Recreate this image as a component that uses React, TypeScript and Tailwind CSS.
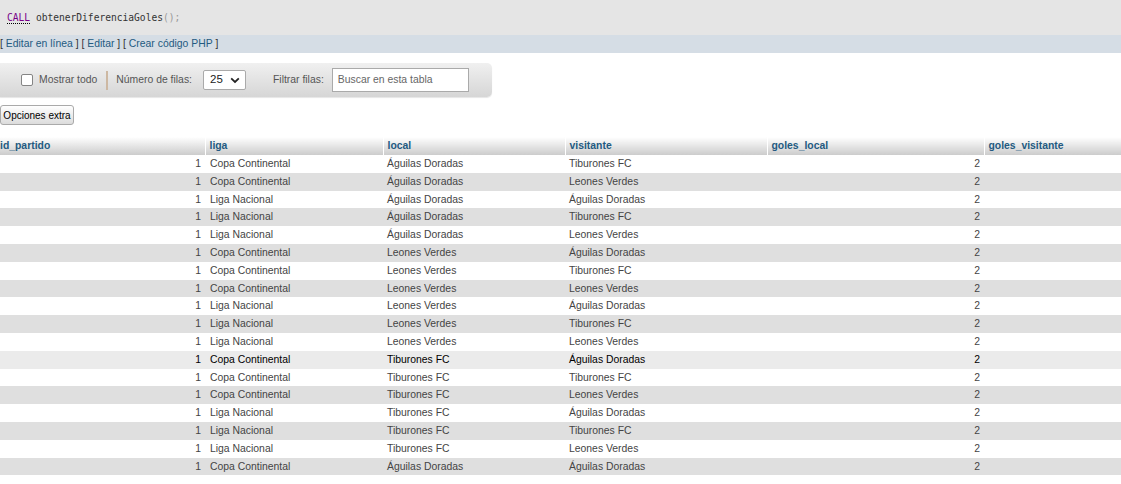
import React from 'react'

type Row = { liga: string, local: string, visitante: string }

const rows: Row[] = [
  { liga: 'Copa Continental', local: 'Águilas Doradas', visitante: 'Tiburones FC' },
  { liga: 'Copa Continental', local: 'Águilas Doradas', visitante: 'Leones Verdes' },
  { liga: 'Liga Nacional', local: 'Águilas Doradas', visitante: 'Águilas Doradas' },
  { liga: 'Liga Nacional', local: 'Águilas Doradas', visitante: 'Tiburones FC' },
  { liga: 'Liga Nacional', local: 'Águilas Doradas', visitante: 'Leones Verdes' },
  { liga: 'Copa Continental', local: 'Leones Verdes', visitante: 'Águilas Doradas' },
  { liga: 'Copa Continental', local: 'Leones Verdes', visitante: 'Tiburones FC' },
  { liga: 'Copa Continental', local: 'Leones Verdes', visitante: 'Leones Verdes' },
  { liga: 'Liga Nacional', local: 'Leones Verdes', visitante: 'Águilas Doradas' },
  { liga: 'Liga Nacional', local: 'Leones Verdes', visitante: 'Tiburones FC' },
  { liga: 'Liga Nacional', local: 'Leones Verdes', visitante: 'Leones Verdes' },
  { liga: 'Copa Continental', local: 'Tiburones FC', visitante: 'Águilas Doradas' },
  { liga: 'Copa Continental', local: 'Tiburones FC', visitante: 'Tiburones FC' },
  { liga: 'Copa Continental', local: 'Tiburones FC', visitante: 'Leones Verdes' },
  { liga: 'Liga Nacional', local: 'Tiburones FC', visitante: 'Águilas Doradas' },
  { liga: 'Liga Nacional', local: 'Tiburones FC', visitante: 'Tiburones FC' },
  { liga: 'Liga Nacional', local: 'Tiburones FC', visitante: 'Leones Verdes' },
  { liga: 'Copa Continental', local: 'Águilas Doradas', visitante: 'Águilas Doradas' },
]

const headers = ['id_partido', 'liga', 'local', 'visitante', 'goles_local', 'goles_visitante']
const widths = ['w-[205px]', 'w-[178px]', 'w-[182px]', 'w-[202px]', 'w-[217px]', '']

function Link({ children }: { children: React.ReactNode }) {
  return <a className="text-[#235a81] cursor-pointer">{children}</a>
}

export default function App() {
  const hovered = 11
  return (
    <div className="w-[1121px] h-[484px] overflow-hidden bg-white text-[10.4px] text-[#444]" style={{ fontFamily: '"Liberation Sans", Arial, sans-serif' }}>
      <div className="h-[35px] bg-[#e5e5e5] flex items-center pl-[7px] pt-[1px]">
        <code className="text-[9.6px] text-[#333]" style={{ fontFamily: '"DejaVu Sans Mono", monospace' }}>
          <span className="text-[#770088] border-b border-dotted border-black">CALL</span> obtenerDiferenciaGoles<span className="text-[#999]">();</span>
        </code>
      </div>
      <div className="h-[18px] bg-[#d5dde5] flex items-center text-[#333]">
        [&nbsp;<Link>Editar en línea</Link>&nbsp;] [&nbsp;<Link>Editar</Link>&nbsp;] [&nbsp;<Link>Crear código PHP</Link>&nbsp;]
      </div>

      <div className="mt-[10px] w-[492px] h-[34px] rounded-r-[5px] bg-gradient-to-b from-[#f0f0f0] to-[#d6d6d6] flex items-center text-[#555] shadow-[0_1px_1px_rgba(0,0,0,0.1)]">
        <span className="ml-[21px] w-[12px] h-[12px] border border-[#858585] rounded-[2px] bg-white"></span>
        <span className="ml-[6px]">Mostrar todo</span>
        <span className="ml-[9px] w-[2px] h-[19px] bg-[#cdb8a2]"></span>
        <span className="ml-[8px]">Número de filas:</span>
        <span className="ml-[11px] w-[43px] h-[20px] bg-white border border-[#aaa] rounded-[2px] flex items-center justify-between pl-[6px] pr-[5px] text-[#222] text-[11.5px]">
          25
          <svg width="10" height="7" viewBox="0 0 10 7"><path d="M1.2 1.4 L5 5 L8.8 1.4" fill="none" stroke="#222" strokeWidth="1.8" /></svg>
        </span>
        <span className="ml-[27px]">Filtrar filas:</span>
        <span className="ml-[8px] w-[137px] h-[24px] bg-white border border-[#aaa] flex items-center pl-[5px] text-[#666]">Buscar en esta tabla</span>
      </div>

      <div className="mt-[8px] w-[74px] h-[20px] border border-[#aaa] rounded-[3px] bg-gradient-to-b from-[#ffffff] to-[#dcdcdc] flex items-center justify-center text-black text-[10px]">
        Opciones extra
      </div>

      <table className="mt-[12px] w-[1121px] border-collapse table-fixed">
        <thead>
          <tr className="h-[18px]">
            {headers.map((h, i) => (
              <th key={h} className={`${widths[i]} bg-gradient-to-b from-[#ffffff] to-[#cccccc] text-left font-bold text-[#235a81] p-0 ${i === 0 ? 'pl-0' : 'pl-[4px]'} ${i < 5 ? 'border-r border-white' : ''}`}>
                {h}
              </th>
            ))}
          </tr>
        </thead>
        <tbody>
          {rows.map((r, i) => {
            const bg = i === hovered ? 'bg-[#ebebeb] text-black' : i % 2 === 1 ? 'bg-[#dfdfdf]' : 'bg-white'
            return (
              <tr key={i} className={`h-[17.8px] ${bg}`}>
                <td className="p-0 pr-[4px] text-right leading-[17.8px]">1</td>
                <td className="p-0 pl-[5px] leading-[17.8px]">{r.liga}</td>
                <td className="p-0 pl-[4px] leading-[17.8px]">{r.local}</td>
                <td className="p-0 pl-[4px] leading-[17.8px]">{r.visitante}</td>
                <td className="p-0 pr-[4px] text-right leading-[17.8px]">2</td>
                <td className="p-0 leading-[17.8px]"></td>
              </tr>
            )
          })}
        </tbody>
      </table>
    </div>
  )
}
